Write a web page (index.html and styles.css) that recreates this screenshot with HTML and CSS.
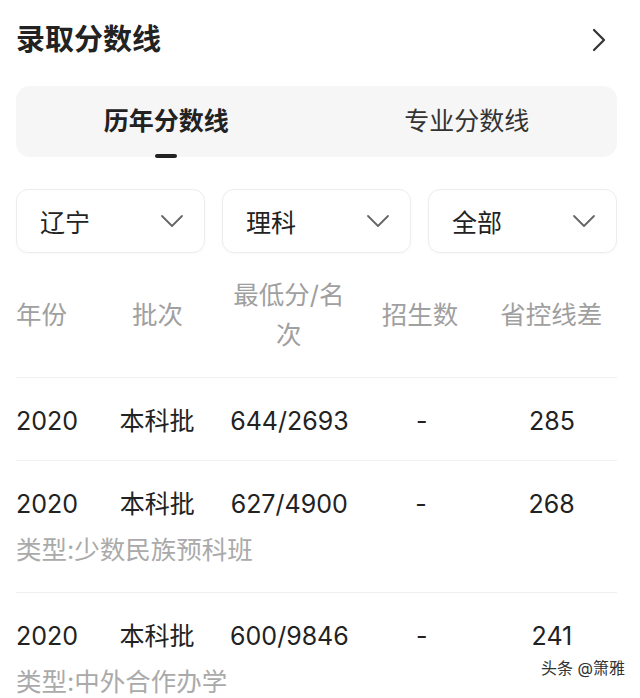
FILE: index.html
```html
<!DOCTYPE html>
<html lang="zh-CN">
<head>
<meta charset="utf-8">
<link rel="stylesheet" href="styles.css">
</head>
<body>
<div class="page">
  <header class="head">
    <h1 class="title">录取分数线</h1>
    <svg class="chev-right" width="16" height="24" viewBox="0 0 16 24"><path d="M3 2 L13 12 L3 22" fill="none" stroke="#333" stroke-width="2.2" stroke-linecap="round" stroke-linejoin="round"/></svg>
  </header>

  <nav class="tabs">
    <div class="tab active"><span class="tab-text">历年分数线</span><span class="indicator"></span></div>
    <div class="tab"><span class="tab-text">专业分数线</span></div>
  </nav>

  <div class="filters">
    <div class="select"><span>辽宁</span><svg width="24" height="14" viewBox="0 0 24 14"><path d="M2 2 L12 12 L22 2" fill="none" stroke="#666" stroke-width="1.8" stroke-linecap="round" stroke-linejoin="round"/></svg></div>
    <div class="select"><span>理科</span><svg width="24" height="14" viewBox="0 0 24 14"><path d="M2 2 L12 12 L22 2" fill="none" stroke="#666" stroke-width="1.8" stroke-linecap="round" stroke-linejoin="round"/></svg></div>
    <div class="select"><span>全部</span><svg width="24" height="14" viewBox="0 0 24 14"><path d="M2 2 L12 12 L22 2" fill="none" stroke="#666" stroke-width="1.8" stroke-linecap="round" stroke-linejoin="round"/></svg></div>
  </div>

  <div class="table">
    <div class="row th">
      <div class="c c1">年份</div>
      <div class="c">批次</div>
      <div class="c">最低分/名次</div>
      <div class="c">招生数</div>
      <div class="c">省控线差</div>
    </div>
    <div class="row tr">
      <div class="line">
        <div class="c c1">2020</div>
        <div class="c">本科批</div>
        <div class="c">644/2693</div>
        <div class="c">-</div>
        <div class="c">285</div>
      </div>
    </div>
    <div class="row tr">
      <div class="line">
        <div class="c c1">2020</div>
        <div class="c">本科批</div>
        <div class="c">627/4900</div>
        <div class="c">-</div>
        <div class="c">268</div>
      </div>
      <div class="sub">类型:少数民族预科班</div>
    </div>
    <div class="row tr">
      <div class="line">
        <div class="c c1">2020</div>
        <div class="c">本科批</div>
        <div class="c">600/9846</div>
        <div class="c">-</div>
        <div class="c">241</div>
      </div>
      <div class="sub">类型:中外合作办学</div>
    </div>
  </div>
  <div class="watermark">头条 @箫雅</div>
</div>
</body>
</html>
```

FILE: styles.css
```css
* { box-sizing: border-box; margin: 0; padding: 0; }
html, body { background: #fff; }
body {
  margin: 0;
  font-family: "Inter", "Noto Sans CJK SC", "Noto Sans", sans-serif;
  color: #222;
  overflow: hidden;
}
.page {
  position: relative;
  width: 640px;
  height: 698px;
  padding: 0 23px 0 16px;
}
.head {
  height: 80px;
  display: flex;
  align-items: center;
  justify-content: space-between;
}
.title {
  font-size: 29px;
  font-weight: 700;
  line-height: 40px;
  color: #222;
}
.chev-right { margin-right: 10px; }

.tabs {
  margin-top: 6px;
  height: 71px;
  background: #f6f6f6;
  border-radius: 14px;
  display: grid;
  grid-template-columns: 1fr 1fr;
}
.tab {
  display: flex;
  flex-direction: column;
  align-items: center;
  padding-top: 19px;
}
.tab-text {
  font-size: 25px;
  line-height: 32px;
  color: #333;
}
.tab.active .tab-text { font-weight: 700; color: #222; }
.indicator {
  margin-top: 17px;
  width: 22px;
  height: 4px;
  border-radius: 2px;
  background: #222;
}

.filters {
  margin-top: 32px;
  display: grid;
  grid-template-columns: repeat(3, 1fr);
  gap: 17px;
}
.select {
  height: 64px;
  border: 1px solid #ececec;
  border-radius: 12px;
  display: flex;
  align-items: center;
  justify-content: space-between;
  padding: 0 20px 0 23px;
  font-size: 25px;
  color: #222;
  box-shadow: 0 1px 3px rgba(0,0,0,0.03);
}

.row { border-bottom: 1px solid #f0f0f0; }
.th, .line {
  display: grid;
  grid-template-columns: 76px repeat(4, 1fr);
  align-items: center;
}
.th {
  padding: 22px 0;
  font-size: 25.5px;
  line-height: 40px;
  color: #a0a0a0;
}
.c { text-align: center; padding: 0 8px; }
.c1 { text-align: left; padding: 0; }
.tr { padding: 28px 0 24px; }
.line {
  font-size: 25px;
  line-height: 30px;
  color: #222;
}
.sub {
  margin-top: 16px;
  margin-bottom: 3px;
  font-size: 25.5px;
  line-height: 30px;
  color: #aaa;
}
.watermark {
  position: absolute;
  left: 541px;
  top: 657px;
  font-size: 16px;
  line-height: 22px;
  color: #333;
  text-shadow: 0 0 2px #fff, 0 0 2px #fff;
}
```
